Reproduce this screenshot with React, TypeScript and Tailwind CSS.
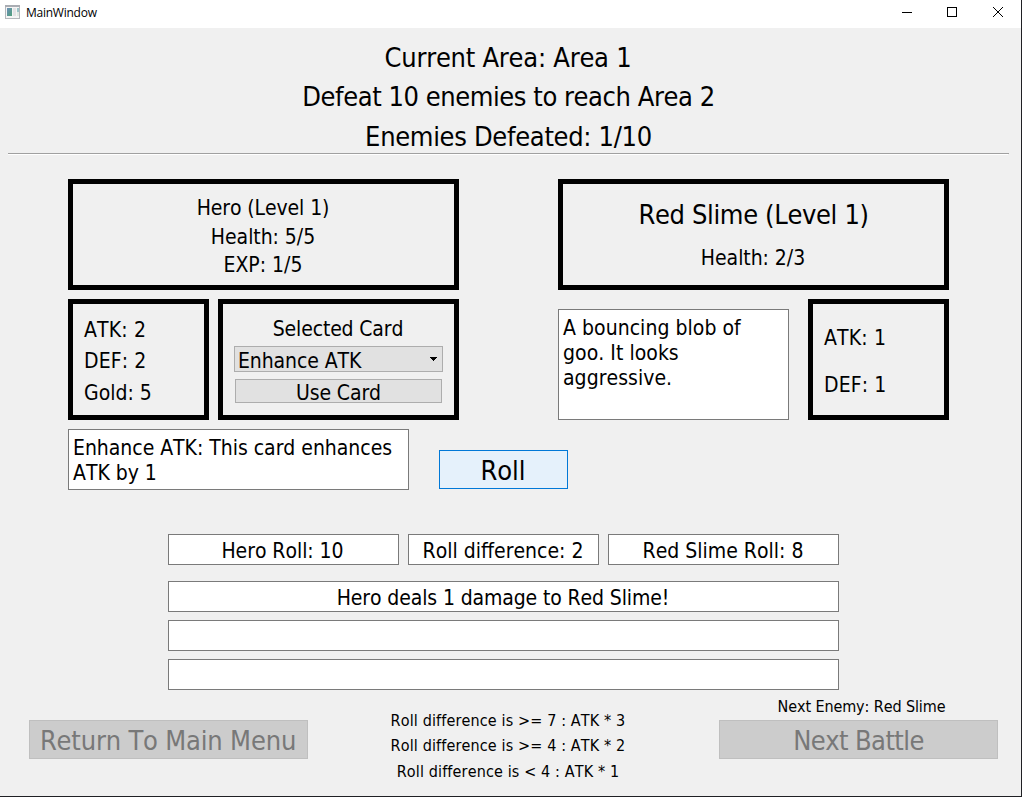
import React from "react";

const frame = "border-[5px] border-black";
const field = "border border-[#7a7a7a] bg-white";

function Line({ className, children }: { className: string; children: React.ReactNode }) {
  return <div className={`flex items-center whitespace-pre ${className}`}>{children}</div>;
}

function TitleBar() {
  return (
    <header className="flex h-7 shrink-0 items-start bg-white">
      <svg className="ml-[5px] mt-[5px]" width="16" height="14" viewBox="0 0 16 14" shapeRendering="crispEdges">
        <defs>
          <linearGradient id="pane" x1="0" y1="0" x2="1" y2="1">
            <stop offset="0" stopColor="#6c8fb8" />
            <stop offset="1" stopColor="#4fa07a" />
          </linearGradient>
        </defs>
        <rect x="0.5" y="0.5" width="14" height="13" fill="#f4f4f4" stroke="#b4b7bb" />
        <rect x="0" y="0" width="15" height="2" fill="#a9acb2" />
        <rect x="2" y="3" width="5" height="8" fill="url(#pane)" />
        <rect x="8" y="3" width="3" height="8" fill="#e2e2e4" />
        <rect x="12" y="3" width="2" height="4" fill="#9cc3c8" />
        <rect x="12" y="7" width="2" height="4" fill="#dfe8e2" />
      </svg>
      <span className="ml-[5px] mt-[5px] flex-1 font-['Open_Sans',sans-serif] text-[12px] leading-4 tracking-[-0.25px] [font-stretch:normal]">MainWindow</span>
      <svg className="mr-[18px] mt-[7px]" width="101" height="10" viewBox="0 0 101 10">
        <path d="M0 5.5h10" stroke="#000" fill="none" />
        <rect x="45.5" y="0.5" width="9" height="9" stroke="#000" fill="none" />
        <path d="M91 0l10 10M101 0l-10 10" stroke="#000" fill="none" />
      </svg>
    </header>
  );
}

export default function App() {
  return (
    <div className="flex h-[797px] w-[1022px] flex-col overflow-hidden border-r border-b border-[#1f2024] bg-[#f0f0f0] font-['DejaVu_Sans_Condensed','DejaVu_Sans',sans-serif] text-[21px] text-black [font-kerning:none] [font-stretch:condensed]">
      <TitleBar />

      <div className="ml-2 mt-[11px] flex w-[1001px] flex-col items-center border-b border-[#a0a0a0] text-[27px]">
        <Line className="h-[39px] pr-[1px] tracking-[-0.25px]">Current Area: Area 1</Line>
        <Line className="h-[39px] tracking-[-0.44px]">Defeat 10 enemies to reach Area 2</Line>
        <Line className="h-[36px] pt-[4px] tracking-[-0.32px]">Enemies Defeated: 1/10</Line>
      </div>
      <div className="ml-2 h-px w-[1000px] bg-white" />

      <main className="mt-6 flex h-[311px] shrink-0 pl-[68px]">
        <section className="flex w-[391px] flex-col gap-[9px]">
          <div className={`${frame} flex h-[111px] shrink-0 flex-col items-center pt-[10px]`}>
            <Line className="h-[29px] pr-[1px] tracking-[-0.1px]">Hero (Level 1)</Line>
            <Line className="h-[29px] pr-[1px] tracking-[-0.05px]">Health: 5/5</Line>
            <Line className="h-[28px] pr-[1px]">EXP: 1/5</Line>
          </div>
          <div className="flex h-[121px] shrink-0 gap-[9px]">
            <div className={`${frame} flex w-[141px] flex-col pl-[11px] pt-[11px]`}>
              <Line className="h-[32px] tracking-[0.15px]">ATK: 2</Line>
              <Line className="h-[30px] tracking-[0.1px]">DEF: 2</Line>
              <Line className="h-[34px]">Gold: 5</Line>
            </div>
            <div className={`${frame} flex w-[241px] flex-col items-center pt-[10px]`}>
              <Line className="h-[32px] pr-[1px] tracking-[-0.15px]">Selected Card</Line>
              <button className="flex h-[26px] w-[209px] items-center justify-between border border-[#adadad] bg-[#e1e1e1] pl-[3px] pr-[5px]">
                <Line className="h-[26px] pt-[6px] tracking-[-0.1px]">Enhance ATK</Line>
                <svg width="7" height="4" viewBox="0 0 7 4" shapeRendering="crispEdges">
                  <path d="M0 0h7v1H0zM1 1h5v1H1zM2 2h3v1H2zM3 3h1v1H3z" fill="#000" />
                </svg>
              </button>
              <button className="mt-[7px] flex h-6 w-[207px] items-center justify-center border border-[#adadad] bg-[#e1e1e1]">
                <Line className="h-6 pt-[6px] tracking-[-0.1px]">Use Card</Line>
              </button>
            </div>
          </div>
          <div className={`${field} h-[61px] w-[341px] shrink-0 whitespace-pre pl-1 pt-[6px] leading-[25px] tracking-[-0.03px]`}>
            {"Enhance ATK: This card enhances\nATK by 1"}
          </div>
        </section>

        <div className="-ml-5 mt-[271px] w-[129px] shrink-0">
          <button className="flex h-[39px] w-full items-center justify-center border border-[#0078d7] bg-[#e5f1fb] text-[27px]">
            <Line className="h-8 pr-[1px] pt-[3px]">Roll</Line>
          </button>
        </div>

        <section className="-ml-[10px] flex w-[391px] flex-col gap-[9px]">
          <div className={`${frame} flex h-[111px] shrink-0 flex-col items-center pt-[13px]`}>
            <Line className="h-[37px] text-[27px] tracking-[-0.35px]">Red Slime (Level 1)</Line>
            <Line className="mt-[10px] h-[29px] pr-[1px] tracking-[-0.05px]">Health: 2/3</Line>
          </div>
          <div className="flex h-[121px] shrink-0 items-end justify-between">
            <div className={`${field} h-[111px] w-[231px] whitespace-pre pl-1 pt-[6px] leading-[25px] tracking-[0.04px]`}>
              {"A bouncing blob of\ngoo. It looks\naggressive."}
            </div>
            <div className={`${frame} flex h-full w-[141px] flex-col pl-[11px] pt-[11px]`}>
              <Line className="h-[47px] tracking-[0.15px]">ATK: 1</Line>
              <Line className="h-[47px] tracking-[0.1px]">DEF: 1</Line>
            </div>
          </div>
        </section>
      </main>

      <section className="ml-[168px] mt-[44px] flex w-[671px] shrink-0 flex-col gap-2">
        <div className="mb-2 flex h-[31px] gap-[9px]">
          <div className={`${field} flex w-[231px] items-center justify-center`}><Line className="pr-[2px] pt-[4px] tracking-[-0.05px]">Hero Roll: 10</Line></div>
          <div className={`${field} flex w-[191px] items-center justify-center`}><Line className="pr-[1px] pt-[4px]">Roll difference: 2</Line></div>
          <div className={`${field} flex w-[231px] items-center justify-center`}><Line className="pr-[1px] pt-[4px]">Red Slime Roll: 8</Line></div>
        </div>
        <div className={`${field} flex h-[31px] items-center justify-center`}><Line className="pr-[1px] pt-[4px] tracking-[-0.12px]">Hero deals 1 damage to Red Slime!</Line></div>
        <div className={`${field} h-[31px]`} />
        <div className={`${field} h-[31px]`} />
      </section>

      <footer className="flex shrink-0 pl-[29px] text-base">
        <button className="mt-[30px] flex h-[39px] w-[279px] items-center justify-center border border-[#bfbfbf] bg-[#cccccc] text-[27px] text-[#787878]">
          <Line className="h-8 pr-[1px] pt-[3px] tracking-[-0.18px]">Return To Main Menu</Line>
        </button>
        <div className="mt-[18px] flex w-[401px] flex-col items-center pr-[1px] tracking-[0.14px]">
          <Line className="h-[25px]">{"Roll difference is >= 7 : ATK * 3"}</Line>
          <Line className="h-[25px]">{"Roll difference is >= 4 : ATK * 2"}</Line>
          <Line className="h-[27px]">{"Roll difference is < 4 : ATK * 1"}</Line>
        </div>
        <div className="ml-[10px] flex w-[279px] flex-col items-center">
          <Line className="mt-[3px] h-[27px] pl-[6px] pt-[1px] tracking-[-0.1px]">Next Enemy: Red Slime</Line>
          <button className="flex h-[39px] w-full items-center justify-center border border-[#bfbfbf] bg-[#cccccc] text-[27px] text-[#787878]">
            <Line className="h-8 pt-[3px] tracking-[-0.58px]">Next Battle</Line>
          </button>
        </div>
      </footer>
    </div>
  );
}
